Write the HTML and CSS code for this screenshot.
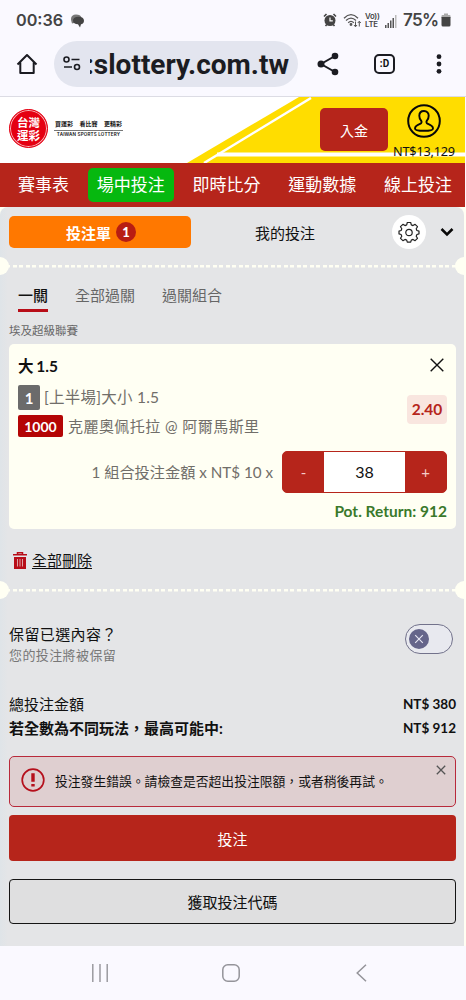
FILE: index.html
```html
<!DOCTYPE html>
<html lang="zh-Hant">
<head>
<meta charset="utf-8">
<title>台灣運彩</title>
<link rel="stylesheet" href="styles.css">
</head>
<body>
<div class="status">
  <span class="clock">00:36</span>
  <svg class="chat" width="15" height="14" viewBox="0 0 15 14"><path d="M1 5C1 2 3 .5 6 .5c3 0 5 1 5.500 3L4 9 2 9.500C1.500 7.500 1 6.500 1 5z" fill="#777"/><path d="M3 6.500C3 4 5 2.700 8.500 2.700S14 4.200 14 6.700c0 2.300-1.500 3.300-3 3.600L10 13.500 8 10.300C5 10.200 3 9 3 6.500z" fill="#444"/></svg>
  <div class="status-icons">
    <svg width="14" height="14" viewBox="0 0 14 14"><circle cx="7" cy="7.500" r="5.500" fill="#444"/><path d="M1 3.500 3.500 1M10.500 1 13 3.500M2.500 13l1.300-1.500M11.500 13l-1.300-1.500" stroke="#444" stroke-width="1.600"/><path d="M7 4.500v3.300h2.800" stroke="#fff" stroke-width="1.200" fill="none"/></svg>
    <svg class="wifi" width="19" height="15" viewBox="0 0 19 15" fill="none" stroke="#555" stroke-width="1.300"><path d="M1 5.200Q8 -1.800 15 5.200M3 7.500Q8 2.800 13 7.500M5.200 9.800Q8 7 10.800 9.800"/><circle cx="8" cy="11.500" r=".8" fill="#555"/><path d="M12.500 8.500v5M11 12l1.500 1.800L14 12M16.300 13.500v-5M14.800 10l1.500-1.800L17.800 10" stroke-width="1"/></svg>
    <span class="volte"><span>Vo))</span><span>LTE</span></span>
    <svg class="signal" width="12" height="13" viewBox="0 0 12 13" fill="#555"><path d="M0 10h1.500v3H0zM2.500 8H4v5H2.500zM5 5.500h1.500V13H5zM7.500 3H9v10H7.500z"/><path d="M10 0h1.500v13H10z" fill="#bbb"/></svg>
    <span class="battery-text">75%</span>
    <svg width="10" height="14" viewBox="0 0 10 14"><path d="M3 .5h4V2h1.500Q9.500 2 9.500 3v2h-9V3Q.5 2 1.500 2H3z" fill="#aaa"/><path d="M.5 4h9v8q0 1.500-1.500 1.500H2Q.5 13.500.5 12z" fill="#444"/></svg>
  </div>
</div>
<div class="toolbar">
  <svg class="home" width="22" height="22" viewBox="0 0 22 22" fill="none" stroke="#1b1c22" stroke-width="2"><path d="M1.500 11.500 11 2l9.500 9.500M4.300 9.500V20h13.400V9.500" stroke-linejoin="round"/></svg>
  <div class="address">
    <svg width="18" height="15" viewBox="0 0 18 15" fill="none" stroke="#1b1c22" stroke-width="1.600"><circle cx="3.500" cy="3.500" r="2.500"/><path d="M8.500 3.500h8M1 11h8"/><circle cx="14" cy="11" r="2.500"/></svg>
    <div class="url"><span>:slottery.com.tw</span></div>
  </div>
  <svg class="share" width="22" height="24" viewBox="0 0 22 24"><path d="M18 4 4 12l14 8" fill="none" stroke="#1b1c22" stroke-width="2"/><g fill="#1b1c22"><circle cx="18" cy="4" r="3.300"/><circle cx="4" cy="12" r="3.500"/><circle cx="18" cy="20" r="3.300"/></g></svg>
  <span class="tabs-count">:D</span>
  <svg class="more" width="6" height="20" viewBox="0 0 6 20" fill="#1b1c22"><circle cx="3" cy="2.700" r="2.400"/><circle cx="3" cy="10" r="2.400"/><circle cx="3" cy="17.300" r="2.400"/></svg>
</div>
<header class="brand">
  <svg class="brand-bg" width="465" height="66" viewBox="0 0 465 66"><path d="M187 66 299 0h166v66z" fill="#ffdd00"/><path d="M204 66 311 1" stroke="#fff" stroke-width="2.500"/><path d="M217 57.500h248" stroke="#fff" stroke-width="4"/></svg>
  <div class="logo"><span>台灣</span><span>運彩</span></div>
  <div class="slogan"><span class="slogan-zh">買運彩<i></i>看比賽<i></i>更精彩</span><span class="slogan-en">TAIWAN SPORTS LOTTERY</span></div>
  <span class="deposit">入金</span>
  <div class="account">
    <svg width="34" height="34" viewBox="0 0 34 34" fill="none" stroke="#080808" stroke-width="2"><circle cx="17" cy="17" r="15.800"/><path d="M17 7c-3 0-4.700 2-4.700 4.800 0 2.200.7 3.600 1.800 4.800.9 1.300.5 2.600-1 3.300-3 1.200-5.100 2-5.100 4.500 0 1.600 3.500 2.400 9 2.400s9-.8 9-2.400c0-2.500-2.100-3.300-5.100-4.500-1.500-.7-1.900-2-1-3.300 1.100-1.200 1.800-2.600 1.800-4.800C21.700 9 20 7 17 7z" stroke-width="1.900"/></svg>
    <span class="balance">NT$13,129</span>
  </div>
</header>
<nav class="nav"><span>賽事表</span><span class="live">場中投注</span><span>即時比分</span><span>運動數據</span><span>線上投注</span></nav>
<main class="stage">
<section class="slip">
  <div class="slip-head">
    <div class="slip-tab">投注單<b>1</b></div>
    <span class="my-bets">我的投注</span>
    <span class="gear"><svg width="22" height="22" viewBox="0 0 22 22" fill="none" stroke="#222" stroke-width="1.200" stroke-linejoin="round"><path d="M9.300 1.500h3.400l.6 2.400 1.700.7 2.100-1.300 2.400 2.400-1.300 2.100.7 1.700 2.100.6v2.800l-2.100.6-.7 1.700 1.300 2.100-2.400 2.400-2.100-1.300-1.700.7-.6 2.100H9.300l-.6-2.100-1.700-.7-2.100 1.300-2.400-2.400 1.300-2.100-.7-1.700-2.100-.6v-2.800l2.100-.6.7-1.700-1.300-2.100 2.400-2.400L7 4.600l1.700-.7z"/><circle cx="11" cy="11.500" r="3.200"/></svg></span>
    <svg class="chev" width="14" height="10" viewBox="0 0 14 10"><path d="m1.500 2 5.500 5.500L12.500 2" fill="none" stroke="#080808" stroke-width="2.500"/></svg>
  </div>
  <div class="perforation"></div>
  <div class="tabs"><span class="active">一關</span><span>全部過關</span><span>過關組合</span></div>
  <div class="league">埃及超級聯賽</div>
  <article class="card">
    <div class="pick"><span>大 1.5</span><svg width="14" height="14" viewBox="0 0 14 14"><path d="m.7.700 12.600 12.600M13.300.7.700 13.300" stroke="#111" stroke-width="1.400"/></svg></div>
    <div class="details">
      <div>
        <div class="detail"><b class="tag">1</b><span class="market">[上半場]大小 1.5</span></div>
        <div class="detail second"><b class="tag code">1000</b><span class="match">克麗奧佩托拉 @ 阿爾馬斯里</span></div>
      </div>
      <b class="odds">2.40</b>
    </div>
    <div class="stake"><span class="stake-label">1 組合投注金額 x NT$ 10 x</span><div class="stepper"><span>-</span><span class="amount">38</span><span>+</span></div></div>
    <div class="return">Pot. Return: 912</div>
  </article>
  <div class="clear"><svg width="14" height="17" viewBox="0 0 14 17"><path d="M0 2.800h14M4.500 2.500V.8h5v1.700" fill="none" stroke="#b80d18" stroke-width="1.500"/><path d="M1 5h12v12H1z" fill="#b80d18"/><path d="M4.500 7v7.500M7 7v7.500M9.500 7v7.500" stroke="#e9c7ca" stroke-width=".8"/></svg><span>全部刪除</span></div>
  <div class="perforation"></div>
  <div class="keep">
    <div class="keep-text"><span>保留已選內容？</span><small>您的投注將被保留</small></div>
    <div class="toggle"><span><svg width="20" height="20" viewBox="0 0 20 20"><path d="m6.200 6.200 7.600 7.600M13.800 6.200l-7.600 7.600" stroke="#e8e8f4" stroke-width="1.100"/></svg></span></div>
  </div>
  <div class="total"><span>總投注金額</span><b>NT$ 380</b></div>
  <div class="total"><strong>若全數為不同玩法，最高可能中:</strong><b>NT$ 912</b></div>
  <div class="alert">
    <svg width="24" height="24" viewBox="0 0 24 24"><circle cx="12" cy="12" r="10.800" fill="none" stroke="#b5101c" stroke-width="1.700"/><path d="M10.300 5.200h3.400v8.500h-3.400zM10.300 16h3.400v2.600h-3.400z" fill="#b5101c"/></svg>
    <span>投注發生錯誤。請檢查是否超出投注限額，或者稍後再試。</span>
    <svg class="dismiss" width="10" height="10" viewBox="0 0 10 10"><path d="m.8.800 8.400 8.400M9.200.8.800 9.200" stroke="#555" stroke-width="1.300"/></svg>
  </div>
  <div class="submit">投注</div>
  <div class="get-code">獲取投注代碼</div>
</section>
</main>
<footer class="system">
  <svg width="16" height="18" viewBox="0 0 16 18"><path d="M.8 0v18M8 0v18M15.200 0v18" stroke="#94949a" stroke-width="1.400"/></svg>
  <svg width="18" height="18" viewBox="0 0 18 18"><rect x=".8" y=".8" width="16.400" height="16.400" rx="5" fill="none" stroke="#94949a" stroke-width="1.500"/></svg>
  <svg width="11" height="18" viewBox="0 0 11 18"><path d="m10 .7-8.800 8.300 8.800 8.300" fill="none" stroke="#94949a" stroke-width="1.500"/></svg>
</footer>
</body>
</html>
```
FILE: styles.css
```css
* { box-sizing: border-box; }
body { margin: 0; width: 466px; height: 1000px; overflow: hidden; background: #faf9ff; color: #111; font-family: Lato, "Noto Sans CJK TC", sans-serif; font-size: 15px; white-space: nowrap; }
svg { display: block; flex: none; }

.status { display: flex; align-items: center; height: 41px; padding: 0 15px 0 16px; color: #444; font-family: Inter, sans-serif; }
.clock { width: 47px; margin-top: -1px; font-size: 16.200px; font-weight: 600; letter-spacing: 0; }
.chat { margin-left: 7px; }
.status-icons { display: flex; align-items: center; margin: -1px 0 0 auto; }
.wifi { margin-left: 6px; }
.volte { display: flex; flex-direction: column; width: 15px; margin-left: 3px; font-size: 7.800px; line-height: 8px; font-weight: 600; letter-spacing: -.3px; }
.signal { margin: 2px 6px 0 5px; }
.battery-text { width: 37px; margin-right: 1px; font-size: 17px; font-weight: 600; letter-spacing: -.6px; }

.toolbar { display: flex; align-items: center; height: 56px; padding: 0 24px 10px 16px; border-bottom: 1px solid #dcdce4; }
.address { display: flex; align-items: center; width: 244px; height: 46px; margin: 0 19px 0 16px; padding-left: 9px; border-radius: 23px; background: #e3e5ef; }
.url { display: flex; justify-content: flex-end; width: 199px; margin: 3px 0 0 9px; overflow: hidden; font-family: Roboto, sans-serif; font-size: 28px; line-height: 40px; font-weight: 700; letter-spacing: 0; color: #1b1c22; }
.tabs-count { width: 21px; height: 20px; margin: 0 auto 0 35px; border: 2px solid #1b1c22; border-radius: 5px; font: 700 10px/15px Roboto, sans-serif; text-align: center; }

.brand { position: relative; display: flex; height: 66px; width: 465px; padding-left: 9px; background: #fff; }
.brand-bg { position: absolute; inset: 0; }
.brand > :not(.brand-bg) { position: relative; }
.logo { display: flex; flex-direction: column; align-items: center; justify-content: center; width: 39px; height: 39px; margin-top: 12px; border: 1px solid #e50012; border-radius: 50%; background: #e50012; box-shadow: inset 0 0 0 1px #f7b9bd; color: #fff; font-family: "Noto Sans CJK TC", sans-serif; font-size: 11.500px; line-height: 13px; font-weight: 700; }
.slogan { display: flex; flex-direction: column; width: 69px; height: 20px; margin: 22px 0 0 6px; }
.slogan-zh { display: flex; justify-content: space-between; height: 12px; padding: 0 1px; border-bottom: 1px solid #777; font-size: 6px; line-height: 9px; font-weight: 700; }
.slogan-en { font: 600 4.600px/8px Inter, sans-serif; letter-spacing: .15px; text-align: center; }
.deposit { width: 68px; height: 43px; margin: 11px 0 0 197px; border-radius: 5px; background: #b6251b; color: #fff; font-size: 14px; line-height: 45px; text-align: center; }
.account { display: flex; flex-direction: column; align-items: center; width: 64px; margin: 7px 0 0 4px; }
.balance { font: 12.700px/27px "Noto Sans", sans-serif; letter-spacing: -.2px; }

.nav { display: flex; align-items: center; justify-content: space-between; width: 465px; height: 44px; padding: 0 13px 0 18px; background: #b6251b; color: #fff; font-size: 17px; line-height: 34px; }
.live { margin: 0 -9px; padding: 0 9px; border-radius: 5px; background: #06b80f; }

.stage { height: 739px; background: #fffff3; }
.slip { width: 464px; height: 739px; padding: 9px 8px 0 9px; border-radius: 8px 8px 0 0; background: linear-gradient(90deg, #dfe4e8, #e4e5e7 8px); }
.slip-head { display: flex; align-items: center; height: 32px; }
.slip-tab { display: flex; align-items: center; justify-content: center; gap: 5px; width: 182px; height: 32px; padding-left: 2px; border-radius: 5px; background: #ff7800; color: #fff; font-weight: 700; }
.slip-tab b { width: 20px; height: 20px; border-radius: 50%; background: #b81d12; font-size: 13px; line-height: 20px; text-align: center; }
.my-bets { margin: 0 0 0 64px; }
.gear { display: grid; place-items: center; width: 34px; height: 34px; margin-left: 77px; border-radius: 50%; background: #fff; }
.chev { margin-left: 14px; }
.perforation { display: flex; align-items: center; justify-content: space-between; height: 18px; margin: 9px -8px 0 -9px; background: repeating-linear-gradient(90deg, #fffff3 0 4px, transparent 4px 6.450px) 0 8px / 100% 2.500px no-repeat; }
.perforation::before, .perforation::after { content: ""; width: 9px; height: 18px; background: #fffff3; border-radius: 0 9px 9px 0; }
.perforation::after { border-radius: 9px 0 0 9px; }

.tabs { display: flex; gap: 27px; margin: 9px 0 0 9px; color: #666; line-height: 22px; }
.tabs span { height: 28px; }
.tabs .active { border-bottom: 3px solid #b80d18; color: #111; font-weight: 500; }
.league { height: 32px; padding-top: 2px; color: #666; font-size: 11.500px; line-height: 34px; }
.card { height: 185px; width: 447px; padding: 12px 9px 0; border-radius: 5px; background: #fffff3; }
.pick { display: flex; justify-content: space-between; height: 29px; padding-right: 3px; font-size: 15.500px; line-height: 20px; font-weight: 700; word-spacing: -1px; }
.pick svg { margin-top: 2px; }
.details { display: flex; justify-content: space-between; height: 66px; color: #716e69; }
.detail { display: flex; align-items: center; gap: 4px; height: 25px; }
.second { height: 22px; margin-top: 5px; gap: 5px; }
.tag { width: 22px; height: 25px; border-radius: 2px; background: #6b6b6b; color: #fff; font-size: 15px; line-height: 26px; text-align: center; }
.code { width: 45px; height: 22px; background: #b40505; line-height: 23px; font-size: 14px; }
.market { margin-top: -3px; font-size: 15.500px; letter-spacing: .25px; }
.match { margin-top: -2px; font-size: 15px; letter-spacing: .45px; }
.odds { width: 40px; height: 29px; margin-top: 10px; border-radius: 4px; background: #f9e6df; color: #b6251b; line-height: 29px; text-align: center; font-size: 15.500px; }
.stake { display: flex; align-items: center; justify-content: flex-end; gap: 9px; height: 42px; color: #716e69; }
.stake-label { margin-top: -2px; font-size: 15.200px; }
.stepper { display: grid; grid-template-columns: 41px 1fr 41px; width: 165px; height: 42px; border: 1px solid #b6251b; border-radius: 5px; overflow: hidden; background: #b6251b; color: #f5cbc8; line-height: 40px; text-align: center; }
.amount { background: #fff; color: #111; font-size: 16px; }
.return { margin-top: 7px; color: #39792b; font-size: 15.500px; line-height: 22px; font-weight: 700; text-align: right; }
.clear { display: flex; align-items: center; gap: 5px; height: 43px; padding: 20px 0 0 4px; }
.clear span { margin-top: -2px; text-decoration: underline; text-underline-offset: 2px; }
.keep { display: flex; justify-content: space-between; height: 44px; margin: 18px 3px 0 0; }
.clear + .perforation { margin-top: 9px; }
.keep-text { display: flex; flex-direction: column; margin-top: 7px; line-height: 21px; letter-spacing: .4px; }
.keep small { color: #777; font-size: 13px; }
.toggle { width: 48px; height: 30px; margin-top: 7px; padding: 4px 3px; border: 1px solid #72728b; border-radius: 15px; background: #e8e9ef; }
.toggle span { display: block; width: 20px; height: 20px; border-radius: 50%; background: #65658a; }
.total { display: flex; align-items: center; justify-content: space-between; height: 24px; }
.keep + .total { margin-top: 31px; }
.total span, .total strong { margin-top: -2px; }
.total strong { font-size: 15px; letter-spacing: 0; }
.total b { font-size: 13.500px; }
.alert { display: flex; width: 447px; height: 51px; margin-top: 16px; padding: 11px 9px 0 11px; border: 1px solid #b82a3b; border-radius: 5px; background: #dfcfd0; font-size: 12.800px; line-height: 27px; }
.alert span { margin-left: 10px; }
.dismiss { margin: -3px 0 0 auto; }
.submit { width: 447px; height: 46px; margin-top: 8px; border-radius: 4px; background: #b6251b; color: #fff; text-align: center; line-height: 48px; }
.get-code { width: 447px; height: 45px; margin-top: 18px; border: 1px solid #151515; border-radius: 4px; background: #dfdfe0; text-align: center; line-height: 44px; }
.system { display: flex; align-items: center; justify-content: space-between; height: 54px; padding: 0 99px 0 92px; }
.system svg:nth-child(2) { margin-right: 3px; }
```
